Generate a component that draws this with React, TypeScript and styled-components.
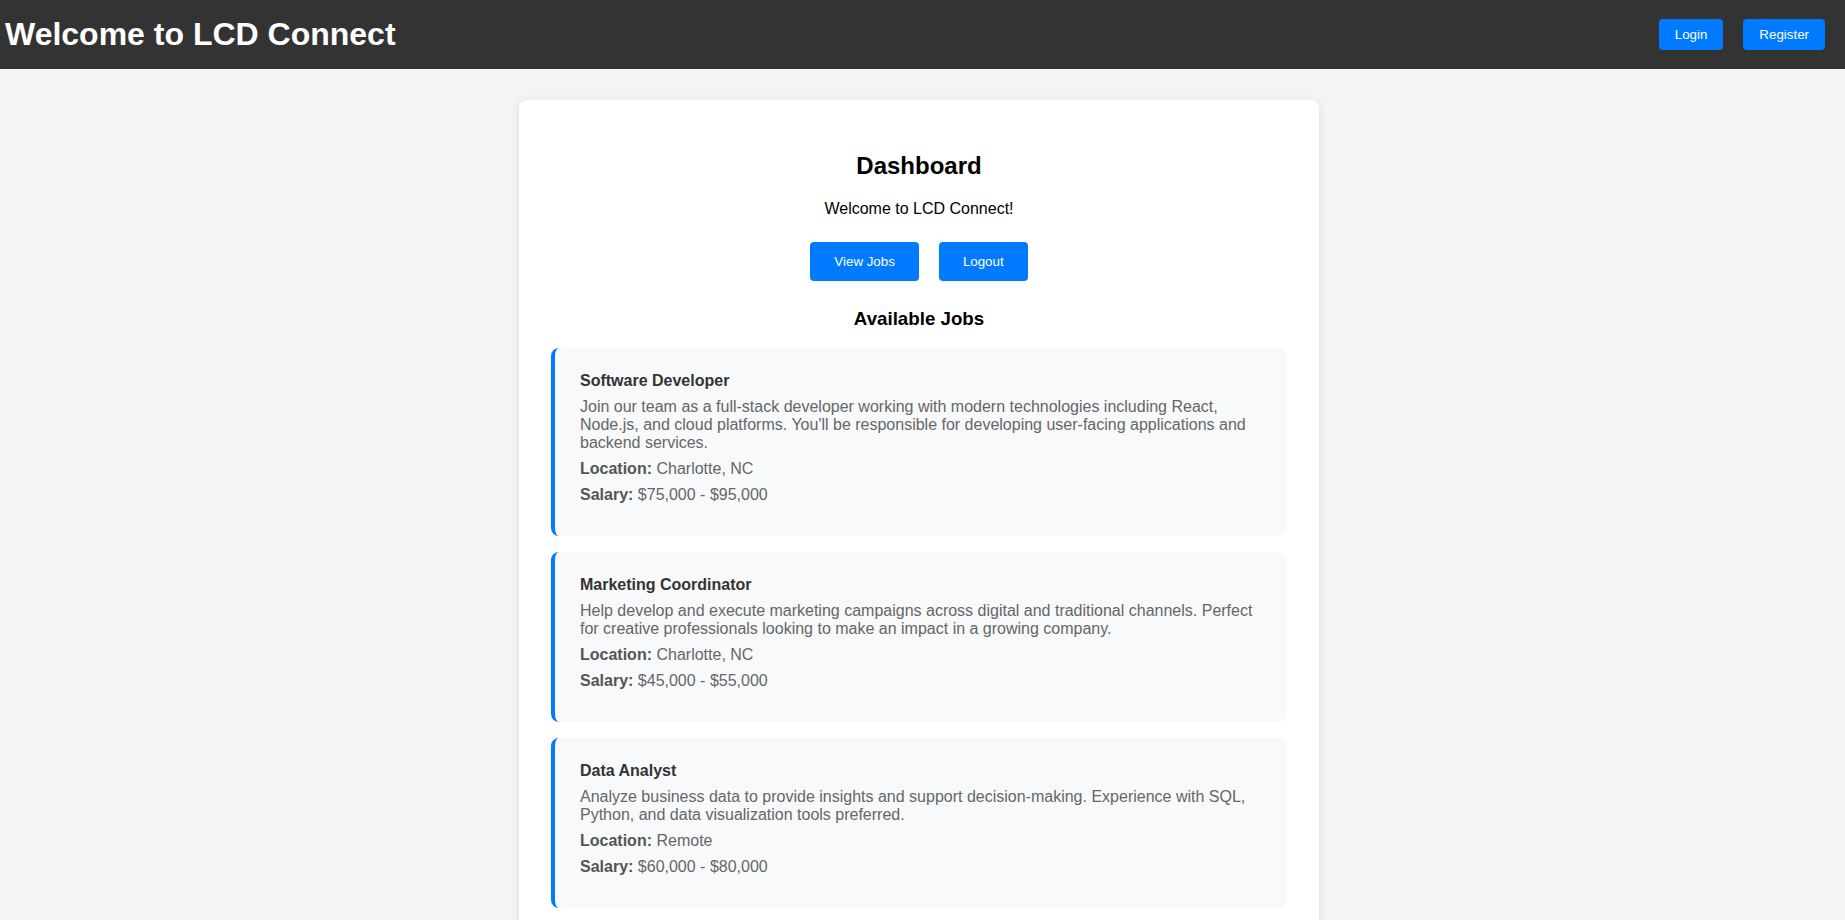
import React from "react";
import styled, { createGlobalStyle } from "styled-components";

const GlobalStyle = createGlobalStyle`
  html, body {
    margin: 0;
    padding: 0;
    background: #f4f4f4;
    font-family: "Liberation Sans", Arial, Helvetica, sans-serif;
    color: #000;
  }
  * { box-sizing: border-box; }
`;

const Header = styled.header`
  display: flex;
  align-items: center;
  justify-content: space-between;
  height: 69px;
  padding: 0 20px 0 5px;
  background: #333;
  color: #fff;
`;

const Title = styled.h1`
  margin: 0;
  font-size: 32px;
  font-weight: bold;
`;

const Nav = styled.nav`
  display: flex;
  align-items: center;
  gap: 20px;
`;

const Button = styled.button<{ $size?: "sm" | "lg" }>`
  font-family: "Liberation Sans", Arial, sans-serif;
  font-size: 13.333px;
  line-height: normal;
  color: #fff;
  background: #007bff;
  border: none;
  border-radius: 4px;
  cursor: pointer;
  padding: ${(p) => (p.$size === "lg" ? "12px 24px" : "8px 16px")};
`;

const Main = styled.main`
  padding: 31px 7px 32px 0;
`;

const Card = styled.section`
  max-width: 800px;
  margin: 0 auto;
  padding: 32px;
  background: #fff;
  border-radius: 8px;
  box-shadow: 0 2px 10px rgba(0, 0, 0, 0.1);
  text-align: center;
`;

const Heading = styled.h2`
  font-size: 24px;
  margin: 20px 0;
`;

const Intro = styled.p`
  font-size: 16px;
  margin: 16px 0;
`;

const ButtonRow = styled.div`
  display: flex;
  justify-content: center;
  gap: 20px;
  padding: 8px 0;
`;

const SubHeading = styled.h3`
  font-size: 18.72px;
  margin: 18.72px 0;
`;

const JobList = styled.div`
  display: flex;
  flex-direction: column;
  gap: 16px;
  text-align: left;
`;

const JobCard = styled.article`
  background: #f8f9fa;
  border-left: 4px solid #007bff;
  border-radius: 8px;
  padding: 24px 24px 24px 25px;
`;

const JobTitle = styled.h4`
  margin: 0 0 8px;
  font-size: 16px;
  font-weight: bold;
  color: #333;
`;

const JobText = styled.p`
  margin: 8px 0;
  font-size: 16px;
  color: #666;
`;

const JobMeta = styled.p`
  margin: 8px 0;
  font-size: 16px;
  color: #666;
  strong {
    color: #555;
  }
`;

const jobs = [
  {
    title: "Software Developer",
    description:
      "Join our team as a full-stack developer working with modern technologies including React, Node.js, and cloud platforms. You'll be responsible for developing user-facing applications and backend services.",
    location: "Charlotte, NC",
    salary: "$75,000 - $95,000",
  },
  {
    title: "Marketing Coordinator",
    description:
      "Help develop and execute marketing campaigns across digital and traditional channels. Perfect for creative professionals looking to make an impact in a growing company.",
    location: "Charlotte, NC",
    salary: "$45,000 - $55,000",
  },
  {
    title: "Data Analyst",
    description:
      "Analyze business data to provide insights and support decision-making. Experience with SQL, Python, and data visualization tools preferred.",
    location: "Remote",
    salary: "$60,000 - $80,000",
  },
];

export default function App() {
  return (
    <>
      <GlobalStyle />
      <Header>
        <Title>Welcome to LCD Connect</Title>
        <Nav>
          <Button>Login</Button>
          <Button>Register</Button>
        </Nav>
      </Header>
      <Main>
        <Card>
          <Heading>Dashboard</Heading>
          <Intro>Welcome to LCD Connect!</Intro>
          <ButtonRow>
            <Button $size="lg">View Jobs</Button>
            <Button $size="lg">Logout</Button>
          </ButtonRow>
          <SubHeading>Available Jobs</SubHeading>
          <JobList>
            {jobs.map((job) => (
              <JobCard key={job.title}>
                <JobTitle>{job.title}</JobTitle>
                <JobText>{job.description}</JobText>
                <JobMeta>
                  <strong>Location:</strong> {job.location}
                </JobMeta>
                <JobMeta>
                  <strong>Salary:</strong> {job.salary}
                </JobMeta>
              </JobCard>
            ))}
          </JobList>
        </Card>
      </Main>
    </>
  );
}
